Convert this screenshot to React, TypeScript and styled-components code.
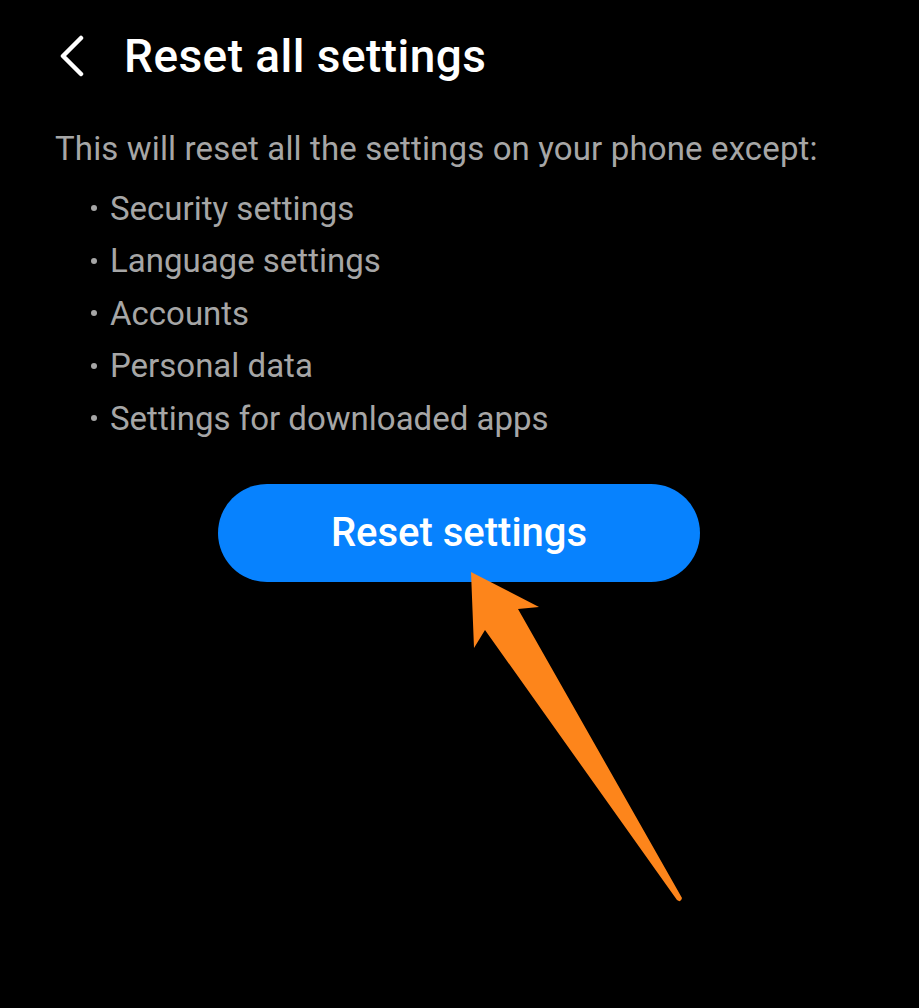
import React from 'react'
import styled, {createGlobalStyle} from 'styled-components'

const GlobalStyle = createGlobalStyle`
  html, body {
    margin: 0;
    padding: 0;
    background: #000;
  }

  body {
    font-family: Roboto, "Noto Sans", "Liberation Sans", sans-serif;
    -webkit-font-smoothing: antialiased;
  }
`

const Screen = styled.div`
  position: relative;
  width: 919px;
  height: 1008px;
  background: #000;
  overflow: hidden;
`

const Header = styled.header`
  display: flex;
  align-items: center;
  height: 56px;
  padding: 28px 0 0 56px;
  gap: 38px;
`

const BackButton = styled.button`
  display: flex;
  align-items: center;
  justify-content: center;
  width: 30px;
  height: 42px;
  padding: 0;
  border: none;
  background: none;
  color: #fff;
`

const Title = styled.h1`
  margin: 0;
  color: #fff;
  font-size: 46px;
  font-weight: 500;
  line-height: 56px;
  letter-spacing: 0.45px;
`

const Content = styled.section`
  padding: 45px 0 0 55px;
`

const Intro = styled.p`
  margin: 0;
  color: #a6a6a6;
  font-size: 33px;
  line-height: 40px;
  letter-spacing: 0.14px;
`

const List = styled.ul`
  list-style: none;
  margin: 13px 0 0;
  padding: 0 0 0 36px;
`

const Item = styled.li`
  display: flex;
  align-items: center;
  height: 52.5px;
  color: #a6a6a6;
  font-size: 33px;

  &::before {
    content: '';
    width: 6px;
    height: 6px;
    margin-right: 13px;
    border-radius: 50%;
    background: #a6a6a6;
  }
`

const Actions = styled.div`
  display: flex;
  padding: 39px 0 0 218px;
`

const ResetButton = styled.button`
  width: 482px;
  height: 98px;
  border: none;
  border-radius: 49px;
  background: #0782fe;
  color: #fff;
  font-family: inherit;
  font-size: 40px;
  font-weight: 500;
`

const Pointer = styled.svg`
  position: absolute;
  inset: 0;
  pointer-events: none;
`

const items = [
  'Security settings',
  'Language settings',
  'Accounts',
  'Personal data',
  'Settings for downloaded apps',
]

const App: React.FC = () => {
  return (
    <Screen>
      <GlobalStyle />
      <Header>
        <BackButton aria-label="Back">
          <svg width="28" height="42" viewBox="0 0 28 42">
            <path d="M24 3 L6 21 L24 39" fill="none" stroke="#fff" strokeWidth="4.5" strokeLinecap="round" strokeLinejoin="round" />
          </svg>
        </BackButton>
        <Title>Reset all settings</Title>
      </Header>

      <Content>
        <Intro>This will reset all the settings on your phone except:</Intro>
        <List>
          {items.map((item) => (
            <Item key={item}>{item}</Item>
          ))}
        </List>
      </Content>

      <Actions>
        <ResetButton>Reset settings</ResetButton>
      </Actions>

      {/* annotation arrow drawn over the screenshot */}
      <Pointer width="919" height="1008" viewBox="0 0 919 1008">
        <path
          d="M471 572 L539 607 L518 609 L682 898 Q681 903 677 900 L485 630 L474 648 Z"
          fill="#fd851b"
        />
      </Pointer>
    </Screen>
  )
}

export default App
